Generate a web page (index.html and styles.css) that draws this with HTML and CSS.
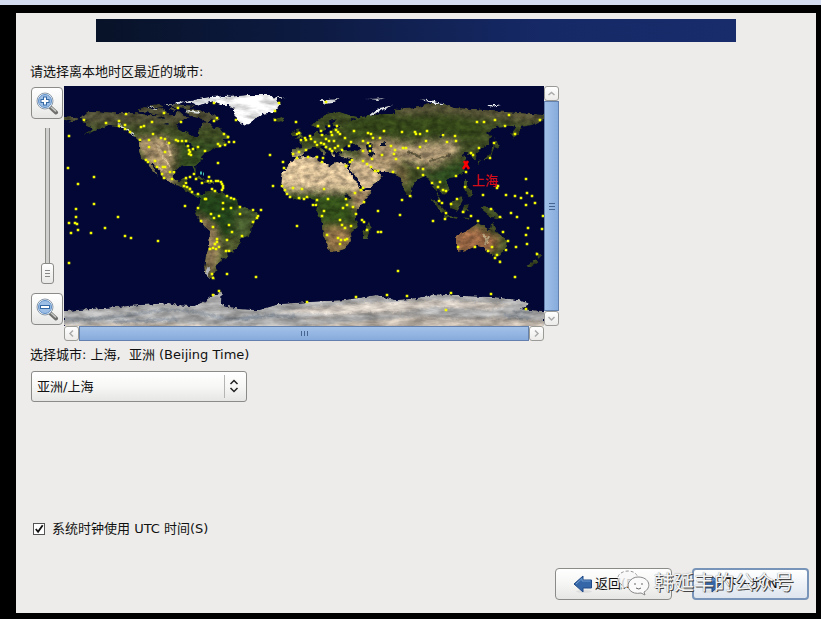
FILE: index.html
```html
<!DOCTYPE html>
<html lang="zh-CN">
<head>
<meta charset="utf-8">
<title>时区选择</title>
<link rel="stylesheet" href="styles.css">
</head>
<body>
<main class="installer">
  <header class="banner"></header>
  <form class="content">
    <label class="prompt" for="zone">请选择离本地时区最近的城市:</label>
    <div class="map-widget">
      <div class="zoom">
        <button class="btn zoom-btn" type="button" aria-label="放大">
          <svg viewBox="0 0 24 24" width="24" height="24"><path d="M15 16l6 5.500" stroke="#6f706d" stroke-width="4" stroke-linecap="round"/><path d="M16 16l5 4.500" stroke="#c9cac7" stroke-width="1.500"/><circle cx="10" cy="10" r="8" fill="#f3f6fa" stroke="#8b9aaa"/><circle cx="10" cy="10" r="6.500" fill="#9dbfe5" stroke="#5e8fc6"/><path d="M10 5.500v9M5.500 10h9" stroke="#3469a5" stroke-width="4"/><path d="M10 6.500v7M6.500 10h7" stroke="#fff" stroke-width="2"/></svg>
        </button>
        <input class="zoom-range" type="range" min="0" max="10" value="0" aria-label="缩放">
        <button class="btn zoom-btn" type="button" aria-label="缩小">
          <svg viewBox="0 0 24 24" width="24" height="24"><path d="M15 16l6 5.500" stroke="#6f706d" stroke-width="4" stroke-linecap="round"/><path d="M16 16l5 4.500" stroke="#c9cac7" stroke-width="1.500"/><circle cx="10" cy="10" r="8" fill="#f3f6fa" stroke="#8b9aaa"/><circle cx="10" cy="10" r="6.500" fill="#9dbfe5" stroke="#5e8fc6"/><path d="M5 10h10" stroke="#3469a5" stroke-width="4"/><path d="M6 10h8" stroke="#fff" stroke-width="2"/></svg>
        </button>
      </div>
      <div class="map-pane">
        <svg class="map" viewBox="0 0 480 240">
          <defs>
            <filter id="coast" x="0" y="0" width="480" height="240" filterUnits="userSpaceOnUse" color-interpolation-filters="sRGB">
              <feTurbulence type="fractalNoise" baseFrequency="0.25" numOctaves="3" seed="4" result="n"/>
              <feDisplacementMap in="SourceGraphic" in2="n" scale="4" xChannelSelector="R" yChannelSelector="G" result="d"/>
              <feTurbulence type="fractalNoise" baseFrequency="0.12 0.18" numOctaves="4" seed="9"/>
              <feColorMatrix values="1.6 0 0 0 -0.3  1.6 0 0 0 -0.3  1.6 0 0 0 -0.3  0 0 0 0 1" result="g"/>
              <feComposite in="d" in2="g" operator="arithmetic" k1="0.5" k2="0.64" k3="0" k4="0" result="t"/>
              <feComposite in="t" in2="d" operator="in"/>
            </filter>
            <filter id="ice" x="0" y="0" width="480" height="240" filterUnits="userSpaceOnUse" color-interpolation-filters="sRGB">
              <feTurbulence type="fractalNoise" baseFrequency="0.25" numOctaves="3" seed="4" result="n"/>
              <feDisplacementMap in="SourceGraphic" in2="n" scale="4" xChannelSelector="R" yChannelSelector="G" result="d"/>
              <feTurbulence type="fractalNoise" baseFrequency="0.05 0.16" numOctaves="4" seed="12"/>
              <feColorMatrix values="1.6 0 0 0 -0.3  1.6 0 0 0 -0.3  1.6 0 0 0 -0.3  0 0 0 0 1" result="g"/>
              <feComposite in="d" in2="g" operator="arithmetic" k1="0.4" k2="0.75" k3="0" k4="0" result="t"/>
              <feComposite in="t" in2="d" operator="in"/>
            </filter>
            <filter id="soft" x="-30%" y="-30%" width="160%" height="160%"><feGaussianBlur stdDeviation="3.5"/></filter>
            <filter id="haze" x="-10%" y="-50%" width="120%" height="200%"><feGaussianBlur stdDeviation="1.2"/></filter>
            <clipPath id="land">
              <path d="M16 33L24 25 32 25 52 27 70 27 85 29 96 29 110 29 115 25 121 30 126 32 118 35 113 40 115 44 124 47 131 51 134 51 134 45 137 41 137 36 145 37 150 42 155 40 159 46 166 50 165 53 158 53 160 56 164 57 158 60 150 62 146 65 141 67 138 70 139 73 137 75 131 80 132 86 131 87 128 80 122 80 115 81 110 85 110 92 115 96 120 92 124 92 121 99 127 101 128 107 134 108 138 109 143 105 148 105 155 106 160 107 165 111 173 113 174 119 183 123 192 125 194 130 189 137 187 145 185 150 177 153 174 161 168 166 163 166 164 171 157 173 156 177 152 179 154 183 150 186 149 191 152 194 147 193 141 187 140 180 142 170 145 160 146 145 140 140 135 132 131 128 133 122 136 117 136 111 132 111 124 106 117 101 108 98 100 92 96 86 89 78 87 78 92 85 94 90 88 84 84 76 78 73 75 66 75 56 78 56 70 50 62 43 53 40 45 39 38 42 28 46 18 49 30 43 22 40 19 36 25 34Z"/>
              <path d="M232 72L240 71 253 70 254 75 266 80 272 76 285 79 284 83 290 92 297 104 308 104 305 110 293 124 292 133 294 140 286 147 287 154 281 163 275 165 265 166 263 158 259 149 258 143 258 136 252 125 253 119 250 114 242 112 230 114 222 107 217 100 218 92 217 88 224 80 228 75ZM305 136L307 142 303 153 299 153 299 146 303 140Z"/>
              <path d="M228 71L228 63 238 62 238 58 234 56 241 54 246 51 251 49 251 45 254 45 254 48 260 48 268 47 268 44 272 42 279 40 270 40 268 36 274 33 266 35 263 39 262 44 257 46 254 42 249 42 247 39 253 35 262 28 273 25 282 28 294 31 294 33 285 32 288 35 298 31 305 30 320 28 330 28 330 23 336 24 340 22 355 21 365 18 378 17 390 22 410 23 430 25 455 27 480 29 480 34 476 36 468 39 457 41 456 46 450 52 447 48 452 41 445 40 433 41 422 47 428 50 425 58 416 63 413 66 412 74 408 74 408 68 404 68 402 66 397 70 404 71 400 74 402 80 400 86 392 91 385 92 381 94 386 103 384 107 380 109 375 104 373 106 378 117 375 115 371 103 368 99 362 90 355 93 348 100 346 109 343 109 338 101 337 92 331 89 328 86 316 86 308 82 304 80 310 85 315 87 319 90 314 96 307 101 299 103 294 94 286 83 286 79 288 72 276 71 275 67 279 65 290 64 295 65 296 62 290 58 281 60 278 64 275 66 270 66 271 71 268 71 266 66 259 60 256 61 263 66 261 70 254 62 248 62 243 64 239 69 235 71Z"/>
              <path d="M391 151L393 149 401 146 408 141 414 137 421 139 421 142 424 144 427 143 428 136 431 142 434 147 443 154 442 162 436 170 431 171 425 167 421 162 413 160 403 164 394 166 394 159ZM434 174L438 174 436 178ZM472 166L478 170 474 173ZM471 174L474 176 466 182 462 180Z"/>
              <path d="M232 53L240 52 237 45 234 42 232 44 234 48ZM227 51L232 49 231 45 227 47ZM208 33L219 31 222 34 215 36ZM414 79L416 75 423 73 427 71 429 65 431 61 428 60 427 67 420 73 414 75ZM428 59L434 62 436 59 429 57ZM430 48L433 58 431 58ZM400 94L404 95 403 101 408 104 409 110 404 111 400 103ZM386 117L391 114 397 110 400 112 396 120 394 125 386 122ZM367 113L373 116 381 124 381 128 376 125ZM380 129L394 131 393 133 380 131ZM400 119L406 118 403 121 406 127 402 124 401 128 398 125ZM398 131L407 132 405 134ZM416 121L422 121 429 123 435 129 440 134 432 132 425 131 422 126ZM346 108L349 111 347 113ZM127 90L137 91 141 94 136 93ZM141 94L149 95 149 97 141 97ZM0 31L8 30 14 33 8 36 0 34ZM403 87L402 90 401 87ZM143 57L149 58 152 58 152 60Z"/>
              <path d="M74 24L80 21 88 23 88 25 75 26ZM85 24L97 22 103 26 108 28 96 29 84 27ZM121 23L134 24 150 29 156 33 153 35 148 33 143 37 138 33 130 31 122 27ZM82 20L95 18 100 21 89 22ZM104 22L113 22 111 25ZM100 18L119 19 132 20 126 22 108 21Z"/>
            </clipPath>
          </defs>
          <rect width="480" height="240" fill="#020736"/>
          <g filter="url(#coast)">
            <g clip-path="url(#land)">
              <rect width="480" height="240" fill="#455327"/>
              <g filter="url(#soft)">
                <path d="M0 16H165V39H0Z" fill="#56553a"/>
                <path d="M70 52L102 50 112 65 107 83 115 99 106 99 84 79Z" fill="#b39a72"/>
                <path d="M115 55H155V75L130 92 113 82Z" fill="#375124"/>
                <path d="M130 105L175 111 195 127 180 148 160 152 142 137 130 125Z" fill="#26491a"/>
                <path d="M175 117L199 124 184 151 168 145Z" fill="#4e6430"/>
                <path d="M133 128L151 141 155 160 147 191 139 191 143 155Z" fill="#a88c65"/>
                <path d="M155 153L178 151 160 177 149 186Z" fill="#5c6534"/>
                <path d="M210 65L286 70 303 104 281 105 214 104Z" fill="#f0d4a8"/>
                <path d="M284 72L331 80 307 106 290 95Z" fill="#e2c59a"/>
                <path d="M219 107L289 107 291 137 259 139 252 117 225 116Z" fill="#37571c"/>
                <path d="M287 105L310 102 299 123 290 123Z" fill="#b99970"/>
                <path d="M259 142L285 141 289 158 265 171Z" fill="#a98452"/>
                <path d="M292 60L318 53 347 59 334 82 306 82Z" fill="#b89f76"/>
                <path d="M332 60L355 57 390 55 397 65 370 81 344 77Z" fill="#bfa780"/>
                <path d="M329 78L343 82 344 101 333 94Z" fill="#8c794b"/>
                <path d="M305 27L380 25 420 35 415 53 350 51 290 55 280 40Z" fill="#3b4f1f"/>
                <path d="M340 15L390 18 480 23 480 38 430 33 375 27 330 30Z" fill="#605b3d"/>
                <path d="M385 80L405 77 402 91 389 101 371 96 363 88Z" fill="#315223"/>
                <path d="M387 144L412 140 435 152 431 165 389 168Z" fill="#a8714c"/>
                <path d="M428 135L445 151 441 172 436 170 437 152Z" fill="#596333"/>
              </g>
              <path d="M93 58l5 10M98 70l8 10M92 78l7 7M103 56l4 14M425 150l-3 8M419 148l4 8" stroke="#d6bd91" stroke-width="2"/>
              <path d="M342 76l8 4 12 3M343 66l8 2 7 5M365 75l9-2 12-4" fill="none" stroke="#6f6547" stroke-width="2"/>
              <path d="M53 38l9 5 9 7M100 18h32M120 25l15 2M84 20l8 3" stroke="#dce2dd" stroke-width="2" fill="none"/>
              <path d="M145 181l-3 8 5 5" stroke="#e5eaf0" stroke-width="3" fill="none"/>
              <path d="M302 59L306 57 309 60 308 63 311 69 307 70 303 65ZM316 57l5-1v4h-5ZM280 109l5-1 1 5-4 1ZM120 57l7-1 1 6-2 4-1-6ZM128 62l5 1-1 2ZM99 38l5-1 2 2M92 32l8-2 1 3M375 51l5-5 1 1-4 5Z" fill="#071132"/>
            </g>
          </g>
          <g filter="url(#ice)">
            <path d="M149 16L153 13 163 11 183 9 203 9 213 12 216 18 211 26 199 28 191 33 186 37 181 40 175 36 171 29 169 22 163 19 156 19Z" fill="#fff"/>
            <path d="M154 16L165 13 185 11 206 12 209 21 197 25 182 37 175 27 169 19Z" fill="#fff"/>
            <path d="M118 17L134 13 145 11 160 10 170 9 158 13 147 16 136 19 126 17ZM256 14l20-1-7 4-7 1ZM305 29l9-7 16-3-16 7-6 4ZM355 13l12 1 14 4-10 0ZM422 19l16 0-9 2ZM300 13l22-1-8 2ZM208 11l16 0-9 1ZM111 16l10-1-9 4Z" fill="#e2e5e7"/>
            <path d="M0 225L25 223 50 221 75 219 105 217 113 219 130 220 143 214 150 209 158 206 157 218 175 223 195 224 215 218 243 216 260 215 280 214 300 211 312 209 330 214 345 213 365 210 370 208 385 209 400 210 430 211 455 214 466 218 456 223 480 225 480 250 0 250Z" fill="#b3b3b3"/>
            <g filter="url(#haze)">
              <path d="M0 233Q45 234 78 227T145 229 210 228M325 214L342 218M440 229L466 232M450 226L468 226M50 236L115 233M170 233Q200 228 232 231" fill="none" stroke="#818a95" stroke-width="2"/>
              <path d="M212 226Q264 219 303 217L380 214 449 218 426 224 372 220 322 229Z" fill="#dbd2c8"/>
              <path d="M0 239Q80 235 151 239T300 235 480 235V250H0Z" fill="#c8bdb1"/>
              <path d="M240 234Q300 224 350 229T440 231" fill="none" stroke="#a4a09c" stroke-width="3"/>
            </g>
          </g>
          <path class="cities" d="M62 28h0M20 34h0M42 37h0M55 35h0M61 39h0M61 43h0M55 40h0M66 46h0M77 41h0M80 40h0M88 36h0M100 27h0M114 22h0M117 36h0M150 35h0M153 32h0M89 48h0M76 54h0M85 54h0M97 52h0M101 53h0M105 57h0M85 61h0M101 66h0M112 54h0M114 55h0M118 55h0M122 55h0M124 60h0M134 61h0M129 63h0M125 64h0M125 68h0M127 69h0M126 66h0M141 65h0M154 58h0M154 77h0M5 50h0M4 82h0M14 98h0M30 91h0M30 118h0M82 74h0M84 76h0M91 75h0M93 81h0M99 81h0M101 81h0M98 88h0M100 92h0M106 86h0M110 86h0M108 93h0M130 88h0M122 92h0M126 91h0M132 93h0M145 91h0M147 95h0M152 95h0M122 97h0M120 100h0M123 101h0M126 103h0M128 106h0M134 108h0M142 113h0M148 103h0M151 105h0M154 95h0M157 96h0M158 98h0M159 100h0M159 102h0M158 104h0M159 117h0"/>
          <path class="cities" d="M150 17h0M215 17h0M211 25h0M211 34h0M232 36h0M172 34h0M262 16h0M160 48h0M164 51h0M165 56h0M170 56h0M161 59h0M156 60h0M206 69h0M219 76h0M220 82h0M209 100h0M218 100h0M221 104h0M223 108h0M233 48h0M235 47h0M237 54h0M241 52h0M242 54h0M246 50h0M247 53h0M251 56h0M242 64h0M235 66h0M229 68h0M233 72h0M254 40h0M257 45h0M258 49h0M262 53h0M265 55h0M267 46h0M268 49h0M265 40h0M273 40h0M272 44h0M274 46h0M276 48h0M281 52h0M270 55h0M260 58h0M262 61h0M266 63h0M268 65h0M271 62h0M274 60h0M278 64h0M285 60h0M287 56h0M290 45h0M299 55h0M304 47h0M309 52h0M299 65h0M306 65h0M306 60h0M304 57h0M244 71h0M253 71h0M259 72h0M258 76h0M253 59h0M257 57h0M286 76h0M288 74h0M282 80h0M299 75h0M303 78h0M307 81h0M311 85h0M314 85h0M297 104h0M299 102h0M229 102h0M238 103h0M260 103h0M226 111h0M235 112h0M240 113h0M243 111h0M253 114h0M264 113h0M252 119h0M249 119h0M282 113h0M283 119h0M279 122h0M291 107h0M300 116h0M138 97h0M144 95h0M141 113h0M163 110h0M167 112h0M170 113h0M167 122h0M176 121h0M159 123h0"/>
          <path class="cities" d="M320 45h0M338 46h0M351 46h0M352 48h0M356 48h0M363 45h0M379 49h0M391 50h0M392 55h0M383 56h0M362 55h0M307 48h0M316 52h0M413 36h0M420 36h0M431 34h0M445 29h0M441 40h0M451 48h0M476 34h0M430 57h0M415 62h0M407 67h0M409 69h0M426 72h0M402 86h0M392 90h0M401 101h0M419 109h0M462 93h0M434 100h0M433 102h0M442 109h0M451 110h0M457 112h0M463 107h0M468 110h0M462 119h0M471 117h0M427 123h0M327 60h0M331 64h0M330 68h0M332 73h0M339 62h0M342 62h0M356 61h0M354 82h0M359 83h0M359 89h0M368 97h0M374 101h0M376 96h0M379 104h0M382 105h0M375 115h0M378 117h0M393 113h0M387 118h0M346 110h0M338 114h0M329 86h0M318 69h0M308 73h0"/>
          <path class="cities" d="M12 123h0M12 131h0M5 137h0M11 137h0M13 138h0M14 144h0M7 147h0M27 147h0M41 142h0M54 131h0M61 150h0M67 152h0M94 155h0M5 177h0M121 120h0M134 122h0M137 135h0M149 141h0M147 128h0M150 132h0M155 130h0M149 209h0M155 205h0M148 188h0M149 192h0M176 128h0M189 124h0M197 124h0M194 130h0M193 132h0M189 136h0M165 139h0M168 146h0M178 150h0M163 154h0M153 153h0M153 156h0M151 158h0M149 162h0M146 163h0M152 163h0M155 161h0M162 165h0M165 165h0M163 188h0M192 191h0M233 140h0M243 216h0M292 211h0M260 125h0M258 130h0M276 134h0M278 139h0M281 142h0M287 140h0M292 128h0M289 121h0M298 134h0M300 136h0M303 144h0M263 149h0M274 152h0M277 154h0M281 154h0M283 153h0M276 158h0M314 125h0M314 146h0M317 146h0M336 129h0M369 135h0M381 133h0M382 127h0M399 126h0M407 130h0M414 135h0M436 131h0M447 127h0M453 131h0M439 146h0M444 155h0M442 164h0M452 161h0M463 158h0M462 149h0M464 142h0M478 143h0M479 130h0M473 168h0M451 191h0M436 176h0M433 169h0M431 172h0M428 161h0M424 165h0M411 161h0M394 161h0M334 185h0M323 209h0M343 210h0M387 207h0M427 208h0M382 224h0M462 223h0"/>
          <path d="M136 87h2M139 88h1" stroke="#3bb5ad" stroke-width="3"/>
          <path d="M400 75l5 8M404 75l-5 8" stroke="#f00" stroke-width="2.500"/>
          <text class="city-name" x="408" y="99">上海</text>
        </svg>
        <div class="scroll scroll-v">
          <button class="arrow" type="button" aria-label="向上"><svg viewBox="0 0 9 9" width="9" height="9"><path d="M1.500 6L4.500 3.500 7.500 6"/></svg></button>
          <div class="thumb"><svg viewBox="0 0 9 9" width="9" height="9"><path d="M2 1.500h6M2 4.500h6M2 7.500h6"/></svg></div>
          <button class="arrow" type="button" aria-label="向下"><svg viewBox="0 0 9 9" width="9" height="9"><path d="M1.500 3L4.500 6 7.500 3"/></svg></button>
        </div>
        <div class="scroll scroll-h">
          <button class="arrow" type="button" aria-label="向左"><svg viewBox="0 0 9 9" width="9" height="9"><path d="M6 1.500L3 4.500 6 7.500"/></svg></button>
          <div class="thumb"><svg viewBox="0 0 9 9" width="9" height="9"><path d="M1.500 2v5M4.500 2v5M7.500 2v5"/></svg></div>
          <button class="arrow" type="button" aria-label="向右"><svg viewBox="0 0 9 9" width="9" height="9"><path d="M3 1.500L6 4.500 3 7.500"/></svg></button>
        </div>
      </div>
    </div>
    <p class="chosen">选择城市: 上海,&nbsp; 亚洲 (Beijing Time)</p>
    <div class="combo">
      <select id="zone"><option>亚洲/上海</option></select>
      <svg class="combo-icon" viewBox="0 0 10 14" width="10" height="14"><path d="M1.500 5L5 1.500 8.500 5M1.500 9L5 12.500 8.500 9"/></svg>
    </div>
    <label class="utc">
      <span class="tick"><input type="checkbox" checked><svg viewBox="0 0 13 13" width="13" height="13"><path d="M3 6.500L5.500 9.500 10.500 2.500"/></svg></span>
      系统时钟使用 UTC 时间(S)
    </label>
  </form>
  <footer class="actions">
    <button class="btn nav" type="button">
      <svg viewBox="0 0 20 20" width="20" height="20"><ellipse cx="11" cy="17.500" rx="8" ry="1.500" fill="#ddd"/><path d="M1 10L10 2V6H18.500V14H10V18Z" fill="#3567a8" stroke="#204a87"/><path d="M3 10L9 4.500V7H17.500" fill="none" stroke="#6f9bd0"/></svg>
      返回(B)
    </button>
    <button class="btn nav nav-default" type="button">
      <svg viewBox="0 0 20 20" width="20" height="20"><ellipse cx="9" cy="17.500" rx="8" ry="1.500" fill="#ddd"/><path d="M19 10L10 2V6H1.500V14H10V18Z" fill="#3567a8" stroke="#204a87"/><path d="M2.500 7H11V4.500L17 10" fill="none" stroke="#6f9bd0"/></svg>
      下一步(N)
    </button>
    <div class="watermark">
      <svg viewBox="0 0 34 26" width="34" height="26"><path d="M11 17L5 19 6 15C-3 8 4 1 12 1C18 1 21 4 22 8" fill="#f8f8f8" fill-opacity=".8" stroke="#999" stroke-dasharray="3 2"/><path d="M22 7C34 7 36 18 28 22L29 25 25 23C15 25 10 18 13 12C15 9 18 7 22 7Z" fill="#fafafa" stroke="#888"/><path d="M19 13v2M26 13v2M20 18q3 2 5 0" stroke="#666" fill="none"/></svg>
      <span>韩延丰的公众号</span>
    </div>
  </footer>
</main>
</body>
</html>
```

FILE: styles.css
```css
* { box-sizing: border-box; }

body {
  margin: 0;
  min-height: 100vh;
  display: flex;
  padding: 8px 5px 6px 16px;
  border-top: 5px solid #d4dcef;
  background: #000;
  color: #111;
  font: 13px/20px "DejaVu Sans", "Noto Sans CJK SC", sans-serif;
}

button, select, input { font: inherit; color: inherit; margin: 0; }

.installer {
  flex: 1;
  display: flex;
  flex-direction: column;
  padding: 6px 7px 13px 14px;
  background: #edecea;
}

.banner {
  width: 84%;
  max-width: 640px;
  height: 23px;
  margin-left: 66px;
  background: linear-gradient(90deg, #081228, #0d1b43 35%, #162967 70%, #182b6a);
}

.content {
  flex: 1;
  display: flex;
  flex-direction: column;
  align-items: flex-start;
  padding-top: 20px;
}

.prompt { margin-bottom: 4px; }
.map-widget { display: flex; gap: 1px; }

.zoom {
  display: flex;
  flex-direction: column;
  align-items: center;
  width: 33px;
  padding: 1px 0 16px 1px;
}

.btn {
  display: flex;
  align-items: center;
  justify-content: center;
  padding: 0;
  border: 1px solid #8b8b88;
  border-radius: 4px;
  background: linear-gradient(#fff, #f5f5f4 50%, #e6e6e4);
}

.btn svg { fill: none; }
.zoom-btn { width: 32px; height: 32px; }

.zoom-range {
  flex: 1;
  width: 13px;
  min-height: 0;
  margin: 9px 0;
  appearance: none;
  writing-mode: vertical-lr;
  direction: rtl;
  background: linear-gradient(90deg, transparent 4px, #8b8b88 4px 5px, #cfcfcd 5px 8px, #8b8b88 8px 9px, transparent 9px);
}

.zoom-range::-webkit-slider-thumb {
  appearance: none;
  width: 13px;
  height: 21px;
  border: 1px solid #8b8b88;
  border-radius: 3px;
  background:
    linear-gradient(#888, #888) 50% 6px / 5px 1px no-repeat,
    linear-gradient(#888, #888) 50% 9px / 5px 1px no-repeat,
    linear-gradient(#888, #888) 50% 12px / 5px 1px no-repeat,
    linear-gradient(#fff, #e8e8e6);
}

.map-pane { display: grid; grid-template-columns: 480px 15px; grid-template-rows: auto 15px; }
.map { display: block; width: 100%; }
.cities { stroke: #f4fa00; stroke-width: 2.6px; stroke-linecap: square; }
.city-name { fill: #d40d18; font-size: 13px; font-weight: 500; }

.scroll { display: flex; }
.scroll-v { flex-direction: column; }

.arrow {
  display: flex;
  align-items: center;
  justify-content: center;
  flex: 0 0 15px;
  padding: 0;
  border: 1px solid #9a9a97;
  border-radius: 3px;
  background: linear-gradient(#fff, #ecebea);
}

.arrow path { fill: none; stroke: #aaa; stroke-width: 1.5; }

.thumb {
  flex: 1;
  display: flex;
  align-items: center;
  justify-content: center;
  border: 1px solid #6481ad;
  background: linear-gradient(#a3c1e8, #86abdc);
}

.scroll-v .thumb { background: linear-gradient(90deg, #a3c1e8, #86abdc); }
.thumb path { stroke: #47658f; }

.chosen { margin: 4px 0 6px; }

.combo { position: relative; width: 216px; margin-left: 1px; }

.combo select {
  display: block;
  width: 100%;
  height: 31px;
  padding: 0 30px 0 5px;
  appearance: none;
  border: 1px solid #8b8b88;
  border-radius: 3px;
  background:
    linear-gradient(#b5b5b3, #b5b5b3) 192px 50% / 1px 23px no-repeat,
    linear-gradient(#fff, #f7f7f6 50%, #e6e6e4);
}

.combo-icon { position: absolute; right: 8px; top: 8px; pointer-events: none; }
.combo-icon path { fill: none; stroke: #222; stroke-width: 1.5; }

.utc { display: flex; align-items: center; gap: 7px; margin: auto 0 29px 3px; }
.tick { display: grid; width: 12px; height: 12px; }
.tick > * { grid-area: 1 / 1; width: 12px; height: 12px; }
.tick input { appearance: none; border: 1px solid #555; background: #fff; }
.tick path { fill: none; stroke: #111; stroke-width: 2; }
.tick input:not(:checked) + svg { visibility: hidden; }

.actions { position: relative; display: flex; justify-content: flex-end; gap: 20px; }
.nav { justify-content: flex-start; width: 117px; height: 32px; gap: 2px; padding-left: 17px; }
.nav-default { padding-left: 8px; border: 2px solid #7894b8; background: linear-gradient(#fff, #eef2f7 50%, #dfe5ee); }

.watermark {
  position: absolute;
  right: 15px;
  top: 0;
  display: flex;
  align-items: center;
  gap: 4px;
  height: 30px;
  color: #f4f4f4;
  font-size: 20px;
  text-shadow: 1px 1px 0 #444, 0 0 1px #777;
  pointer-events: none;
}
```
